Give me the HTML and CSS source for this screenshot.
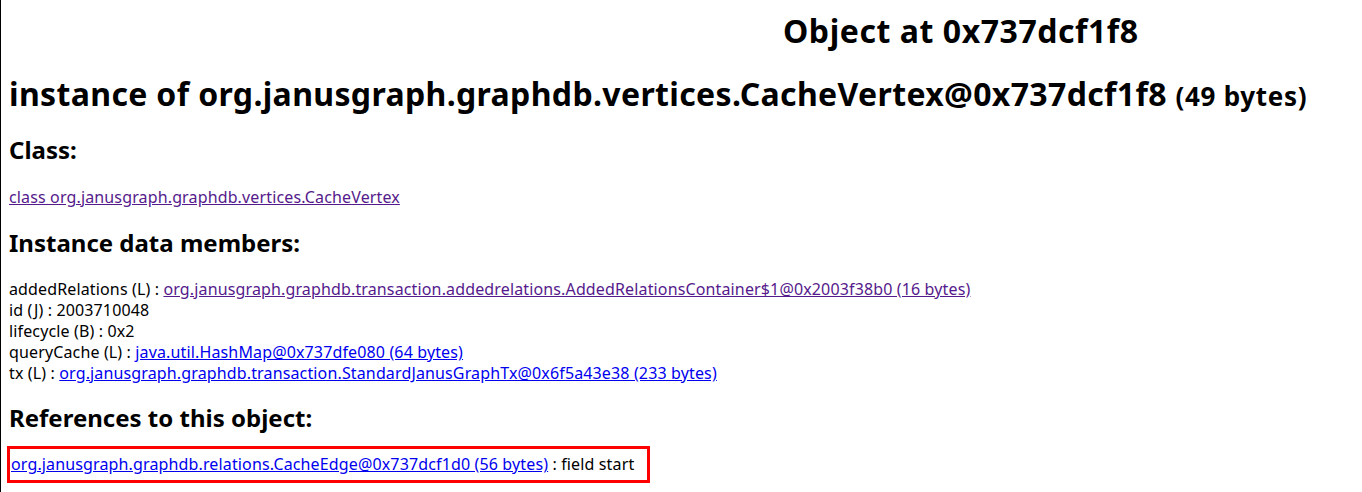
FILE: index.html
```html
<!DOCTYPE html>
<html>
<head>
<meta charset="utf-8">
<title>Object at 0x737dcf1f8</title>
<link rel="stylesheet" href="styles.css">
</head>
<body>
<h1 class="title">Object at 0x737dcf1f8</h1>
<h1 class="instance">instance of org.janusgraph.graphdb.vertices.CacheVertex@0x737dcf1f8 <span class="size">(49 bytes)</span></h1>
<h2 class="section class-head">Class:</h2>
<div class="row class-link"><a class="visited" href="#class">class org.janusgraph.graphdb.vertices.CacheVertex</a></div>
<h2 class="section members-head">Instance data members:</h2>
<div class="members">
  <div class="row">addedRelations (L) : <a class="visited" href="#a">org.janusgraph.graphdb.transaction.addedrelations.AddedRelationsContainer$1@0x2003f38b0 (16 bytes)</a></div>
  <div class="row">id (J) : 2003710048</div>
  <div class="row">lifecycle (B) : 0x2</div>
  <div class="row">queryCache (L) : <a href="#q">java.util.HashMap@0x737dfe080 (64 bytes)</a></div>
  <div class="row">tx (L) : <a href="#t">org.janusgraph.graphdb.transaction.StandardJanusGraphTx@0x6f5a43e38 (233 bytes)</a></div>
</div>
<h2 class="section refs-head">References to this object:</h2>
<div class="highlight"><a href="#r">org.janusgraph.graphdb.relations.CacheEdge@0x737dcf1d0 (56 bytes)</a> : field start</div>
</body>
</html>
```
FILE: styles.css
```css
html, body {
  margin: 0;
  padding: 0;
  background: #fff;
}
body {
  font-family: "Noto Sans", "Open Sans", sans-serif;
  color: #000;
  border-left: 1px solid #000;
  min-height: 492px;
  box-sizing: border-box;
  padding: 10px 8px 0 8px;
  font-size: 16px;
}
a { color: #0000ee; text-decoration: underline; }
a.visited { color: #551a8b; }
.title {
  font-size: 32px;
  font-weight: 700;
  line-height: 42px;
  letter-spacing: 0.55px;
  margin: 0 0 21px 774px;
}
.instance {
  font-size: 32px;
  font-weight: 700;
  line-height: 42px;
  letter-spacing: 0.35px;
  margin: 0 0 16.5px 0;
}
.size { font-size: 26px; letter-spacing: 0.7px; }
.section {
  font-size: 24px;
  font-weight: 700;
  line-height: 32px;
  margin: 0;
}
.row {
  line-height: 21px;
  letter-spacing: 0.14px;
  margin: 0;
}
.section.class-head { margin-bottom: 21.5px; }
.row.class-link { margin-bottom: 18.5px; }
.section.members-head { margin-bottom: 20.5px; }
.section.refs-head { margin-top: 17.5px; margin-bottom: 12.5px; }
.highlight {
  display: inline-block;
  border: 3px solid #ff0000;
  margin-left: -2px;
  padding: 5px 13px 5px 1px;
  line-height: 21px;
  letter-spacing: 0.14px;
}
```
